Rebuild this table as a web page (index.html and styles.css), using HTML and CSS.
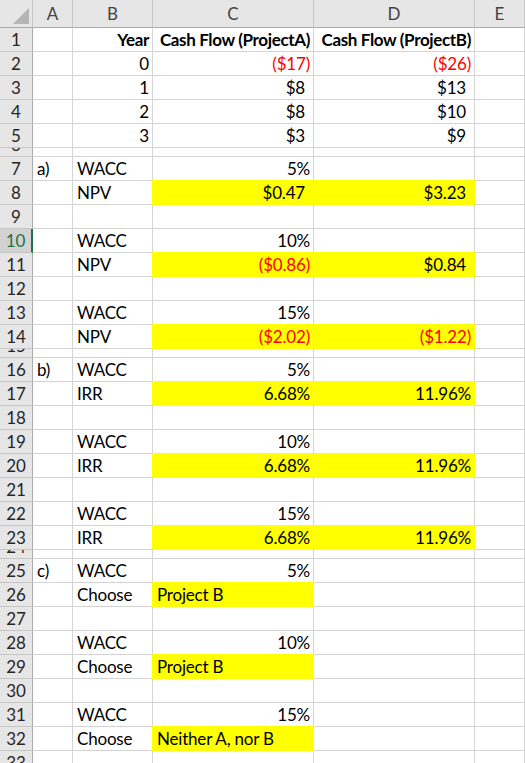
FILE: index.html
```html
<!DOCTYPE html>
<html>
<head>
<meta charset="utf-8">
<link rel="stylesheet" href="styles.css">
</head>
<body>
<div class="sheet">
  <div class="row head">
    <div class="corner"><svg width="32" height="27" viewBox="0 0 32 27"><polygon points="29,8 29,24 13,24" fill="#b5b5b5"/></svg></div>
    <div class="ch">A</div><div class="ch">B</div><div class="ch">C</div><div class="ch">D</div><div class="ch">E</div>
  </div>

  <div class="row"><div class="rh">1</div><div class="c"></div><div class="c r b">Year</div><div class="c r b">Cash Flow (ProjectA)</div><div class="c r b">Cash Flow (ProjectB)</div><div class="c"></div></div>
  <div class="row"><div class="rh">2</div><div class="c"></div><div class="c r">0</div><div class="c r red">($17)</div><div class="c r red">($26)</div><div class="c"></div></div>
  <div class="row"><div class="rh">3</div><div class="c"></div><div class="c r">1</div><div class="c r cp">$8</div><div class="c r cp">$13</div><div class="c"></div></div>
  <div class="row"><div class="rh">4</div><div class="c"></div><div class="c r">2</div><div class="c r cp">$8</div><div class="c r cp">$10</div><div class="c"></div></div>
  <div class="row"><div class="rh">5</div><div class="c"></div><div class="c r">3</div><div class="c r cp">$3</div><div class="c r cp">$9</div><div class="c"></div></div>
  <div class="row hid"><div class="rh">6</div><div class="c"></div><div class="c"></div><div class="c"></div><div class="c"></div><div class="c"></div></div>

  <div class="row"><div class="rh">7</div><div class="c">a)</div><div class="c">WACC</div><div class="c r">5%</div><div class="c"></div><div class="c"></div></div>
  <div class="row"><div class="rh">8</div><div class="c"></div><div class="c">NPV</div><div class="c r cp y">$0.47</div><div class="c r cp y">$3.23</div><div class="c"></div></div>
  <div class="row"><div class="rh">9</div><div class="c"></div><div class="c"></div><div class="c"></div><div class="c"></div><div class="c"></div></div>
  <div class="row"><div class="rh sel">10</div><div class="c"></div><div class="c">WACC</div><div class="c r">10%</div><div class="c"></div><div class="c"></div></div>
  <div class="row"><div class="rh">11</div><div class="c"></div><div class="c">NPV</div><div class="c r red y">($0.86)</div><div class="c r cp y">$0.84</div><div class="c"></div></div>
  <div class="row"><div class="rh">12</div><div class="c"></div><div class="c"></div><div class="c"></div><div class="c"></div><div class="c"></div></div>
  <div class="row"><div class="rh">13</div><div class="c"></div><div class="c">WACC</div><div class="c r">15%</div><div class="c"></div><div class="c"></div></div>
  <div class="row"><div class="rh">14</div><div class="c"></div><div class="c">NPV</div><div class="c r red y">($2.02)</div><div class="c r red y">($1.22)</div><div class="c"></div></div>
  <div class="row hid"><div class="rh">15</div><div class="c"></div><div class="c"></div><div class="c"></div><div class="c"></div><div class="c"></div></div>

  <div class="row"><div class="rh">16</div><div class="c">b)</div><div class="c">WACC</div><div class="c r">5%</div><div class="c"></div><div class="c"></div></div>
  <div class="row"><div class="rh">17</div><div class="c"></div><div class="c">IRR</div><div class="c r y">6.68%</div><div class="c r y">11.96%</div><div class="c"></div></div>
  <div class="row"><div class="rh">18</div><div class="c"></div><div class="c"></div><div class="c"></div><div class="c"></div><div class="c"></div></div>
  <div class="row"><div class="rh">19</div><div class="c"></div><div class="c">WACC</div><div class="c r">10%</div><div class="c"></div><div class="c"></div></div>
  <div class="row"><div class="rh">20</div><div class="c"></div><div class="c">IRR</div><div class="c r y">6.68%</div><div class="c r y">11.96%</div><div class="c"></div></div>
  <div class="row"><div class="rh">21</div><div class="c"></div><div class="c"></div><div class="c"></div><div class="c"></div><div class="c"></div></div>
  <div class="row"><div class="rh">22</div><div class="c"></div><div class="c">WACC</div><div class="c r">15%</div><div class="c"></div><div class="c"></div></div>
  <div class="row"><div class="rh">23</div><div class="c"></div><div class="c">IRR</div><div class="c r y">6.68%</div><div class="c r y">11.96%</div><div class="c"></div></div>
  <div class="row hid"><div class="rh">24</div><div class="c"></div><div class="c"></div><div class="c"></div><div class="c"></div><div class="c"></div></div>

  <div class="row"><div class="rh">25</div><div class="c">c)</div><div class="c">WACC</div><div class="c r">5%</div><div class="c"></div><div class="c"></div></div>
  <div class="row"><div class="rh">26</div><div class="c"></div><div class="c">Choose</div><div class="c y">Project B</div><div class="c"></div><div class="c"></div></div>
  <div class="row"><div class="rh">27</div><div class="c"></div><div class="c"></div><div class="c"></div><div class="c"></div><div class="c"></div></div>
  <div class="row"><div class="rh">28</div><div class="c"></div><div class="c">WACC</div><div class="c r">10%</div><div class="c"></div><div class="c"></div></div>
  <div class="row"><div class="rh">29</div><div class="c"></div><div class="c">Choose</div><div class="c y">Project B</div><div class="c"></div><div class="c"></div></div>
  <div class="row"><div class="rh">30</div><div class="c"></div><div class="c"></div><div class="c"></div><div class="c"></div><div class="c"></div></div>
  <div class="row"><div class="rh">31</div><div class="c"></div><div class="c">WACC</div><div class="c r">15%</div><div class="c"></div><div class="c"></div></div>
  <div class="row"><div class="rh">32</div><div class="c"></div><div class="c">Choose</div><div class="c y">Neither A, nor B</div><div class="c"></div><div class="c"></div></div>
  <div class="row"><div class="rh">33</div><div class="c"></div><div class="c"></div><div class="c"></div><div class="c"></div><div class="c"></div></div>
</div>
</body>
</html>
```

FILE: styles.css
```css
* { box-sizing: border-box; }
html, body { margin: 0; padding: 0; background: #fff; }
body { font-family: Lato, "Open Sans", sans-serif; font-size: 17px; color: #000; overflow: hidden; }
.sheet { width: 525px; height: 763px; overflow: hidden; }
.row {
  display: grid;
  grid-template-columns: 33px 40px 80px 161px 161px 1fr;
  height: 24px;
}
.row.head { height: 28px; }
.row.hid { height: 9px; }
.corner {
  background: #e6e6e6;
  border-right: 1px solid #c6c6c6;
  border-bottom: 1px solid #ababab;
}
.corner svg { display: block; }
.ch {
  background: #e6e6e6;
  border-right: 1px solid #c6c6c6;
  border-bottom: 1px solid #ababab;
  display: flex; align-items: flex-end; justify-content: center;
  padding-bottom: 3px;
  color: #444;
  line-height: 20px;
}
.rh {
  background: #e6e6e6;
  border-right: 1px solid #ababab;
  border-bottom: 1px solid #c6c6c6;
  display: flex; align-items: flex-end; justify-content: center;
  color: #262626;
  line-height: 20px;
  padding-bottom: 1px;
  overflow: hidden;
}
.rh.sel {
  background: #d2d2d2;
  color: #217346;
  border-right: 2px solid #217346;
}
.c {
  border-right: 1px solid #d4d4d4;
  border-bottom: 1px solid #d4d4d4;
  display: flex; align-items: flex-end;
  padding: 0 3px 1px 4px;
  line-height: 20px;
  white-space: nowrap;
  letter-spacing: -0.2px;
}
.r { justify-content: flex-end; }
.b { font-weight: 700; letter-spacing: -0.35px; }
.red { color: #ff0000; }
.cp { padding-right: 8px; }
.y {
  background: #ffff00;
  border-color: #ffff00;
  box-shadow: -1px 0 0 #ffff00, 0 -1px 0 #ffff00, -1px -1px 0 #ffff00;
}
```
